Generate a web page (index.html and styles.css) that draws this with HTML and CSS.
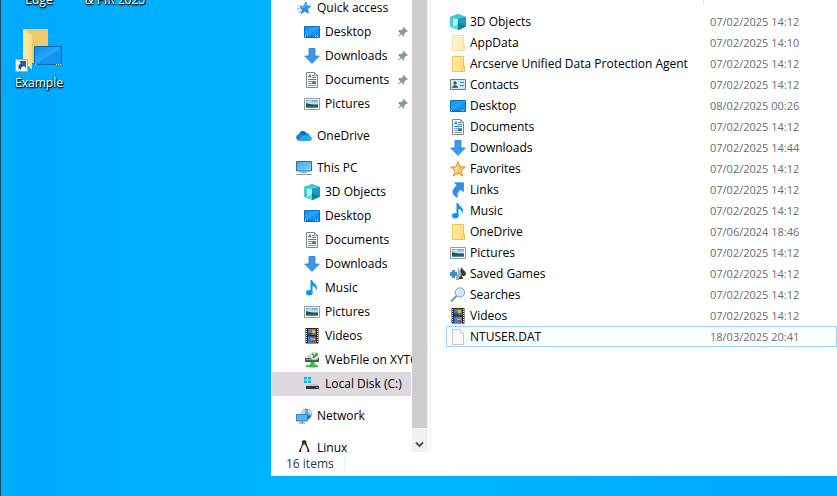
FILE: index.html
```html
<!DOCTYPE html>
<html lang="en">
<head>
<meta charset="utf-8">
<title>File Explorer</title>
<link rel="stylesheet" href="styles.css">
</head>
<body>
<svg class="sprite" aria-hidden="true">
  <defs>
    <linearGradient id="sky" x1="0" y1="0" x2="1" y2="1"><stop offset="0" stop-color="#0a8ff2"/><stop offset=".5" stop-color="#27a6ff"/><stop offset=".55" stop-color="#0f95f8"/><stop offset="1" stop-color="#0c93f6"/></linearGradient>
    <linearGradient id="paper" x1="0" y1="0" x2="1" y2="0"><stop offset="0" stop-color="#ffe9a0"/><stop offset="1" stop-color="#fddd7c"/></linearGradient>
    <linearGradient id="screen" x1="0" y1="0" x2="1" y2="1"><stop offset="0" stop-color="#3aa8f5"/><stop offset="1" stop-color="#8ad2ff"/></linearGradient>
    <linearGradient id="photo" x1="0" y1="0" x2="0" y2="1"><stop offset="0" stop-color="#5fa5e6"/><stop offset=".5" stop-color="#d3ebf8"/><stop offset=".6" stop-color="#2f5f62"/><stop offset=".8" stop-color="#3f7a72"/><stop offset="1" stop-color="#4f95bd"/></linearGradient>
  </defs>
  <symbol id="i-star" viewBox="0 0 16 16"><path d="M10 2l.8 4 4 .2-3.200 2.600.8 4.400-3.600-2L5 13.500l1.300-4L4 7l3.600-.8z" fill="#2196ee" stroke="#1375c2" stroke-width=".7"/><path d="M2 6h3M1 9h4M2.500 12h2" stroke="#6ab4ec" stroke-width="1"/><path d="M9.500 4l-.7 3-3 .5" stroke="#6cc3ff" fill="none"/></symbol>
  <symbol id="i-desktop" viewBox="0 0 16 16"><path d="M.5 2.500h15v11H.5z" fill="url(#sky)" stroke="#1070b8"/><path d="M1 12.500h14" stroke="#0b76ca"/><path d="M1 12.500h1m9 0h1m1 0h1" stroke="#fff"/></symbol>
  <symbol id="i-down" viewBox="0 0 16 16"><path d="M5 .5h6V8h4.300L8 15.500.7 8H5z" fill="#3899ee" stroke="#2880d2" stroke-width=".8"/></symbol>
  <symbol id="i-doc" viewBox="0 0 16 16"><path d="M2.500.5h8l3 3v12h-11z" fill="#fff" stroke="#858585"/><path d="M10.500.5v3h3" fill="none" stroke="#999"/><path d="M4 5.500l2-3 1 3M5 4.500h2M8 3.500h2M8 5.500h4M4 7.500h8" stroke="#2685ca" fill="none"/><path d="M4 9.500h4M4 11.500h4M4 13.500h8" stroke="#8b9ba4"/><path d="M8 9h4v3H8z" fill="#4b91c5"/><path d="M8 11l2-1 2 1v1H8z" fill="#37725b"/></symbol>
  <symbol id="i-pic" viewBox="0 0 16 16"><path d="M.5 2.500h15v11H.5z" fill="#fff" stroke="#969ba2"/><path d="M2 4h12v8H2z" fill="url(#photo)"/><path d="M2 7l3 1 4 1 5 .5v1H2z" fill="#264e4b"/><path d="M3 6l3-1 2 1" stroke="#e8f6ff" fill="none"/></symbol>
  <symbol id="i-pin" viewBox="0 0 16 16"><path d="M9.500 3l4 4-1 1-1-.4-2 2 .2 2.500-1.100 1L6 10.500l-3.500 3-.5-.5 3-3.500L2.500 7l1-1.200 2.500.3 2-2L7.700 3l1-1z" fill="#8b98a1"/></symbol>
  <symbol id="i-cloud" viewBox="0 0 16 16"><path d="M3 6C4 2 9 2 11 5.500L8 9z" fill="#0965bd"/><path d="M3 6c2-.5 4 0 5 1l-5 6C-.5 12-1 7 3 6z" fill="#1681d5"/><path d="M8 8c1-4 6-3 5.500 0L11 11z" fill="#1b8ddc"/><path d="M2 12l6-4.200c2-.8 4 .5 5.500 0C16 8 17 12 14 13H3.500z" fill="#29a8ed"/></symbol>
  <symbol id="i-pc" viewBox="0 0 16 16"><path d="M.5 1.500h15v9.500H.5z" fill="url(#screen)" stroke="#386f93"/><path d="M8 11v1.500M4.500 12.500h7" stroke="#91a5b3"/><path d="M0 14.500h16" stroke="#8799a5"/></symbol>
  <symbol id="i-cube" viewBox="0 0 16 16"><path d="M8 0l8 3v9.500L8 16l-8-3.500V3z" fill="#2fb9ce"/><path d="M0 3l8-3 8 3-8 2z" fill="#39cbd9"/><path d="M1 4l7 1v10l-7-3z" fill="#b4f3f7"/><path d="M0 3l3 .8v9.800l-3-1.100z" fill="#46cddc"/><path d="M8 5l8-2v9.500L8 16z" fill="#179eb4"/><path d="M8 9l8 3.500L8 16z" fill="#087f9b"/><path d="M3 13l5-3v6z" fill="#5bdde7"/></symbol>
  <symbol id="i-music" viewBox="0 0 16 16"><ellipse cx="5.300" cy="12.800" rx="3.300" ry="2.700" fill="#0c96f2"/><path d="M6.500 0h1.700c.3 3 4.800 4 4.800 7.500 0 1.500-.5 2.500-1.500 3.500 1-3-.5-4.500-3-5v7H6.500z" fill="#0c96f2"/></symbol>
  <symbol id="i-video" viewBox="0 0 16 16"><path d="M1.500 0h13v15.500h-13z" fill="#292b32"/><path d="M4 1h8v6H4zM4 8.500h8V15H4z" fill="#3f79cf"/><path d="M5 2h3v2H5z" fill="#9c5caf"/><path d="M8 2h3v3H8z" fill="#eebc19"/><path d="M4 5h4v2H4z" fill="#355c24"/><path d="M6 9l3 2 2-1v3H8z" fill="#eab019"/><path d="M8 12h3v2H8z" fill="#c83c2e"/><path d="M2.500 1v14M13.500 1v14" stroke="#eee" stroke-dasharray="1 1"/></symbol>
  <symbol id="i-netdrive" viewBox="0 0 16 16"><path d="M1 6l3-3h10l1 3z" fill="#d0d3d5"/><path d="M1 6h14v4H1z" fill="#54595c"/><path d="M2 7h7v1H2z" fill="#92989c"/><circle cx="10.500" cy="4" r="4" fill="#eef5ed" stroke="#b2bfb2" stroke-width=".6"/><path d="M8 2l2 1-1 3M10 6l3-4M11 2h2v2" stroke="#2aa745" stroke-width="1.400" fill="none"/><path d="M2 14h12" stroke="#4dba54" stroke-width="2"/><path d="M6.500 10h4v2h1v3.500h-6V12h1z" fill="#44b84e"/></symbol>
  <symbol id="i-disk" viewBox="0 0 16 16"><path d="M0 1h3v2.500H0zm4 0h3v2.500H4zM0 4.500h3V7H0zm4 0h3V7H4z" fill="#0fb3ed"/><path d="M4 8h9l2 2H2z" fill="#c6c6c6"/><path d="M2 10h13v3H2z" fill="#343739"/><path d="M12 11.500h2" stroke="#58d44c"/></symbol>
  <symbol id="i-network" viewBox="0 0 16 16"><circle cx="10.500" cy="6" r="5.500" fill="#57a8d3"/><path d="M6 2c3-2 4 1 3 3s-3 1-4 2zm6-1c3 1 4 4 3 6l-3-2z" fill="#b5e1ed"/><path d="M11 7l4 1-3 4z" fill="#2a699f"/><path d="M.5 6.500h11v6.500H.5z" fill="#55b7f4" stroke="#3982b3"/><path d="M6 13v2M3 15h6" stroke="#5687aa"/></symbol>
  <symbol id="i-linux" viewBox="0 0 16 16"><path d="M6 1.500C7-.2 10-.2 10.500 2c.1 3 1 4 2.200 6.500C14 11 13 13 12 14H4c-2-2-.5-4.500.5-6C6 5.500 6 4 6 1.500z" fill="#252525"/><path d="M7 5h2.500l2 4.500-.5 4H5.500L5 9.500z" fill="#f5f5f5"/><path d="M7 3.500h2.500L8.300 5.200zM2.500 12l3 2-1 1.500-3-1zM13 11.500l2 3-3.500 1z" fill="#e6a91b"/></symbol>
  <symbol id="i-folder" viewBox="0 0 16 16"><path d="M2.500.5h11V10h1v5.500h-12z" fill="url(#paper)" stroke="#ecc657"/><path d="M12.500 15.500V11l1-1" fill="none" stroke="#ecc657"/></symbol>
  <symbol id="i-contact" viewBox="0 0 16 16"><path d="M.5 2.500h15v10H.5z" fill="#cce7f7" stroke="#4c88b3"/><path d="M2 4h6v7H2z" fill="#eff4f2"/><circle cx="5" cy="6" r="1.800" fill="#634631"/><path d="M2 11c0-4 6-4 6 0z" fill="#3b7165"/><path d="M10 5.500h4M10 8.500h4" stroke="#4887b9"/></symbol>
  <symbol id="i-fav" viewBox="0 0 16 16"><path d="M8 .8l2 5 5.300.3-4.200 3.500 1.500 5.400L8 12l-4.600 3 1.500-5.400L.7 6.100 6 5.800z" fill="#ffc466" stroke="#e38c28"/><path d="M8 3v7L4 13l1.700-4-3-2 4-.5z" fill="#ffe1a1"/></symbol>
  <symbol id="i-link" viewBox="0 0 16 16"><path d="M4.500.7h9v9L11 7.500c-3 1.500-4.500 4-3.500 8C2 13 1 8 7 3.500z" fill="#2d90e5" stroke="#2379c7" stroke-width=".6"/></symbol>
  <symbol id="i-game" viewBox="0 0 16 16"><path d="M11 1c1 2 3 3 4.500 5 1.500 3-1 5-3.500 3.500l1 3.500H9z" fill="#343a40"/><path d="M8 1c1 3 4 5 3.500 8-.5 2-2 2-2.500 1v4H5.500c1-2 1-3 0-5z" fill="#a0abb4"/><path d="M8 1L5 7l2 3 1.500-3z" fill="#dce5ec"/><path d="M0 6h2V4h3v2h2v4H5v2H2v-2H0z" fill="#3e8fcb"/></symbol>
  <symbol id="i-search" viewBox="0 0 16 16"><path d="M6.500 9L1 14.500" stroke="#8296a6" stroke-width="2"/><circle cx="10" cy="5.500" r="4.700" fill="#cbe9fb" stroke="#8ca2b3"/><path d="M7 6c0-3 2-4 5-3" stroke="#fff" fill="none"/></symbol>
  <symbol id="i-file" viewBox="0 0 16 16"><path d="M2.500.5H10L13.500 4v11.500h-11z" fill="#fafafa" stroke="#c4c4c4"/><path d="M10 .5V4h3.500" fill="#fff" stroke="#c4c4c4"/></symbol>
</svg>

<main class="desktop">
  <div class="shortcuts">
    <a class="shortcut" href="#"><span>Edge</span></a>
    <a class="shortcut" href="#"><span>&amp; PIR 2025</span></a>
    <a class="shortcut" href="#">
      <svg class="shortcut-art" viewBox="7 0 48 44" aria-hidden="true">
        <path d="M15 1h25v34H15z" fill="#eec96e"/><path d="M15 1l9 6v34l-9-7z" fill="#ffe699"/><path d="M15 1l9 6v34l-2-1V8z" fill="#ffdb80"/>
        <path d="M26.500 18.500h27v18h-27z" fill="url(#sky)" stroke="#0868ad"/><path d="M27 36.500h1m20 0h1m1 0h1m1 0h1" stroke="#fff"/>
        <path d="M7.500 31.500h12v12h-12z" fill="#f4f4f4" stroke="#aaa"/><path d="M11 33h7v7l-2-2c-3 1-3 2-3 4-4-2-3-5 0-7z" fill="#2858a0"/>
      </svg>
      <span>Example</span>
    </a>
  </div>

  <section class="window" aria-label="File Explorer">
    <div class="panes">
      <nav class="tree" aria-label="Folders">
        <ul>
          <li><a class="node" href="#"><svg class="icon"><use href="#i-star"/></svg><span>Quick access</span></a>
            <ul>
              <li><a class="node" href="#"><svg class="icon"><use href="#i-desktop"/></svg><span>Desktop</span><svg class="pin"><use href="#i-pin"/></svg></a></li>
              <li><a class="node" href="#"><svg class="icon"><use href="#i-down"/></svg><span>Downloads</span><svg class="pin"><use href="#i-pin"/></svg></a></li>
              <li><a class="node" href="#"><svg class="icon"><use href="#i-doc"/></svg><span>Documents</span><svg class="pin"><use href="#i-pin"/></svg></a></li>
              <li><a class="node" href="#"><svg class="icon"><use href="#i-pic"/></svg><span>Pictures</span><svg class="pin"><use href="#i-pin"/></svg></a></li>
            </ul>
          </li>
          <li><a class="node" href="#"><svg class="icon"><use href="#i-cloud"/></svg><span>OneDrive</span></a></li>
          <li><a class="node" href="#"><svg class="icon"><use href="#i-pc"/></svg><span>This PC</span></a>
            <ul>
              <li><a class="node" href="#"><svg class="icon"><use href="#i-cube"/></svg><span>3D Objects</span></a></li>
              <li><a class="node" href="#"><svg class="icon"><use href="#i-desktop"/></svg><span>Desktop</span></a></li>
              <li><a class="node" href="#"><svg class="icon"><use href="#i-doc"/></svg><span>Documents</span></a></li>
              <li><a class="node" href="#"><svg class="icon"><use href="#i-down"/></svg><span>Downloads</span></a></li>
              <li><a class="node" href="#"><svg class="icon"><use href="#i-music"/></svg><span>Music</span></a></li>
              <li><a class="node" href="#"><svg class="icon"><use href="#i-pic"/></svg><span>Pictures</span></a></li>
              <li><a class="node" href="#"><svg class="icon"><use href="#i-video"/></svg><span>Videos</span></a></li>
              <li><a class="node" href="#"><svg class="icon"><use href="#i-netdrive"/></svg><span>WebFile on XYT6</span></a></li>
              <li><a class="node selected" href="#" aria-current="true"><svg class="icon"><use href="#i-disk"/></svg><span>Local Disk (C:)</span></a></li>
            </ul>
          </li>
          <li><a class="node" href="#"><svg class="icon"><use href="#i-network"/></svg><span>Network</span></a></li>
          <li><a class="node" href="#"><svg class="icon"><use href="#i-linux"/></svg><span>Linux</span></a></li>
        </ul>
      </nav>
      <div class="scrollbar">
        <div class="thumb"></div>
        <button class="scroll-down" type="button" aria-label="Scroll down"><svg viewBox="0 0 9 7"><path d="M1 1.500l3.500 3.500L8 1.500" fill="none" stroke="#555" stroke-width="2"/></svg></button>
      </div>
      <div class="files">
        <div class="header-edge"></div>
        <table>
          <tbody>
            <tr><td><svg class="icon"><use href="#i-cube"/></svg>3D Objects</td><td>07/02/2025 14:12</td></tr>
            <tr><td><svg class="icon faded"><use href="#i-folder"/></svg>AppData</td><td>07/02/2025 14:10</td></tr>
            <tr><td><svg class="icon"><use href="#i-folder"/></svg>Arcserve Unified Data Protection Agent</td><td>07/02/2025 14:12</td></tr>
            <tr><td><svg class="icon"><use href="#i-contact"/></svg>Contacts</td><td>07/02/2025 14:12</td></tr>
            <tr><td><svg class="icon"><use href="#i-desktop"/></svg>Desktop</td><td>08/02/2025 00:26</td></tr>
            <tr><td><svg class="icon"><use href="#i-doc"/></svg>Documents</td><td>07/02/2025 14:12</td></tr>
            <tr><td><svg class="icon"><use href="#i-down"/></svg>Downloads</td><td>07/02/2025 14:44</td></tr>
            <tr><td><svg class="icon"><use href="#i-fav"/></svg>Favorites</td><td>07/02/2025 14:12</td></tr>
            <tr><td><svg class="icon"><use href="#i-link"/></svg>Links</td><td>07/02/2025 14:12</td></tr>
            <tr><td><svg class="icon"><use href="#i-music"/></svg>Music</td><td>07/02/2025 14:12</td></tr>
            <tr><td><svg class="icon"><use href="#i-folder"/></svg>OneDrive</td><td>07/06/2024 18:46</td></tr>
            <tr><td><svg class="icon"><use href="#i-pic"/></svg>Pictures</td><td>07/02/2025 14:12</td></tr>
            <tr><td><svg class="icon"><use href="#i-game"/></svg>Saved Games</td><td>07/02/2025 14:12</td></tr>
            <tr><td><svg class="icon"><use href="#i-search"/></svg>Searches</td><td>07/02/2025 14:12</td></tr>
            <tr><td><svg class="icon"><use href="#i-video"/></svg>Videos</td><td>07/02/2025 14:12</td></tr>
            <tr class="focused"><td><svg class="icon"><use href="#i-file"/></svg>NTUSER.DAT</td><td>18/03/2025 20:41</td></tr>
          </tbody>
        </table>
      </div>
    </div>
    <footer class="status"><span>16 items</span></footer>
  </section>
</main>
</body>
</html>
```
FILE: styles.css
```css
* { box-sizing: border-box; }

body {
  margin: 0;
  font: 12px/16px "Open Sans", "Noto Sans", sans-serif;
  color: #000;
  background: #00a9ff;
}

a { color: inherit; text-decoration: none; }
ul { list-style: none; margin: 0; padding: 0; }
.sprite { position: absolute; width: 0; height: 0; }
.icon { width: 16px; height: 16px; flex: none; }
.faded { opacity: .5; }

.desktop {
  display: grid;
  grid-template-columns: 270px minmax(0, 1fr);
  height: 100vh;
  padding-bottom: 20px;
  border-left: 1px solid #1e4a66;
  background: linear-gradient(90deg, #00aaff 0%, #00b4ff 33%, #00b7ff 45%, #00a8ff 100%);
  overflow: hidden;
}

.shortcuts {
  display: grid;
  grid-template-columns: 76px 76px;
  align-content: start;
  row-gap: 20px;
  margin-top: -8px;
  color: #fff;
  text-align: center;
  text-shadow: 0 1px 2px #000, 1px 1px 1px #000;
}
.shortcut { display: flex; flex-direction: column; align-items: center; }
.shortcut-art { width: 48px; height: 44px; margin-bottom: 3px; overflow: visible; }

.window { display: flex; flex-direction: column; min-height: 0; background: #fff; }
.panes { display: flex; flex: 1; min-height: 0; overflow: hidden; }

.tree { width: 141px; flex: none; overflow: hidden; padding-left: 1px; margin-top: -4px; }
.tree > ul > li + li { margin-top: 8px; }
.node {
  display: flex;
  align-items: center;
  gap: 5px;
  height: 24px;
  padding-left: 24px;
  white-space: nowrap;
}
.node .pin { width: 14px; height: 14px; flex: none; margin: 0 2px 0 auto; }
.tree ul ul .node { padding-left: 32px; }
.selected { background: #dddadd; margin-right: 1px; }

.scrollbar { width: 16px; flex: none; display: flex; flex-direction: column; background: #f2f0f3; }
.thumb { flex: 1; margin-right: 1px; background: #cdcdcd; }
.scroll-down { height: 24px; padding: 6px 2px 0 0; border: 0; background: none; }
.scroll-down svg { width: 9px; height: 7px; }

.files { flex: 1; min-width: 0; margin-left: 2px; border-left: 1px solid #f0f0f0; padding-left: 15px; overflow: hidden; }
.header-edge { width: 258px; height: 5px; border-right: 1px solid #e3e3e3; margin-bottom: 6px; }
table { width: 100%; border-collapse: collapse; table-layout: fixed; }
td { height: 21px; padding: 1px 0 0; white-space: nowrap; }
td:first-child { width: 264px; padding-left: 4px; }
td:last-child { font-size: 11px; color: #6d6d6d; }
td .icon { vertical-align: middle; margin-right: 4px; }
.focused { outline: 1px solid #99d1ff; outline-offset: -1px; }

.status { height: 24px; flex: none; display: flex; align-items: center; padding-left: 15px; color: #1e395b; }
.status span { padding-right: 10px; border-right: 1px solid #eee; }
```
